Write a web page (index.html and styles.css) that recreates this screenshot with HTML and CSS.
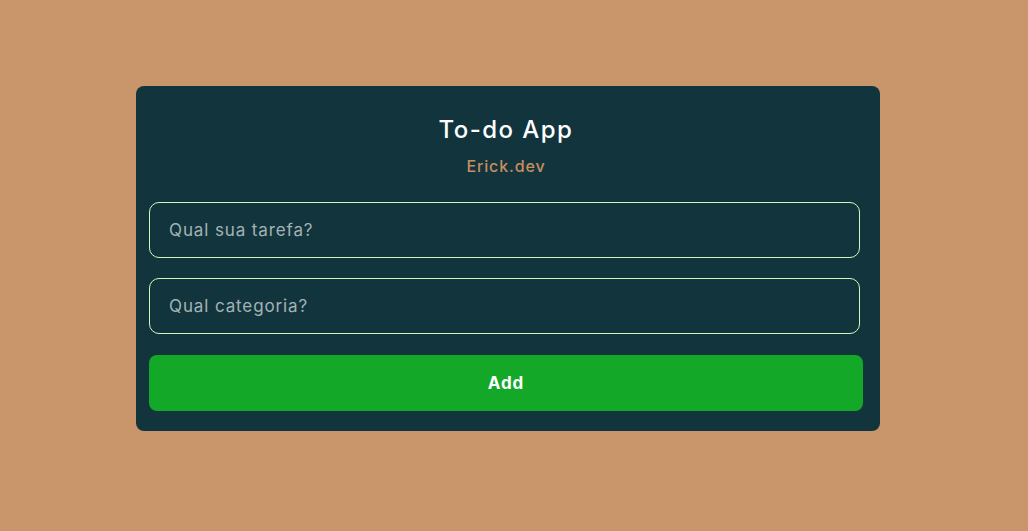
FILE: index.html
```html
<!DOCTYPE html>
<html lang="pt-BR">
<head>
<meta charset="utf-8">
<title>To-do App</title>
<link rel="stylesheet" href="styles.css">
</head>
<body>
<main class="page">
  <section class="card">
    <header class="card-header">
      <h1 class="title">To-do App</h1>
      <p class="subtitle">Erick.dev</p>
    </header>
    <form class="form">
      <input class="field" type="text" placeholder="Qual sua tarefa?">
      <input class="field" type="text" placeholder="Qual categoria?">
      <button class="add-btn" type="button">Add</button>
    </form>
  </section>
</main>
</body>
</html>
```

FILE: styles.css
```css
* { box-sizing: border-box; }
html, body {
  margin: 0;
  height: 100%;
}
body {
  background: #c9956a;
  font-family: "Inter", "Open Sans", sans-serif;
  letter-spacing: 0.055em;
}
.page {
  padding: 86px 148px 0 136px;
}
.card {
  width: 744px;
  background: #12353d;
  border-radius: 8px;
  padding: 26px 17px 20px 13px;
}
.card-header {
  display: flex;
  flex-direction: column;
  align-items: center;
}
.title {
  margin: 0;
  color: #ffffff;
  font-size: 24px;
  line-height: 36px;
  font-weight: 500;
  letter-spacing: 0.06em;
}
.subtitle {
  margin: 6px 0 0;
  color: #c88d60;
  font-size: 16px;
  line-height: 24px;
  font-weight: 500;
}
.form {
  margin-top: 24px;
  display: flex;
  flex-direction: column;
  gap: 20px;
}
.field {
  width: 711px;
  height: 56px;
  background: transparent;
  border: 1px solid #d6f5b8;
  border-radius: 10px;
  padding: 0 19px;
  font-family: inherit;
  font-size: 17px;
  letter-spacing: inherit;
  color: #ffffff;
  outline: none;
}
.field::placeholder {
  color: #a3b3b5;
}
.add-btn {
  width: 714px;
  height: 56px;
  margin-top: 1px;
  border: none;
  border-radius: 8px;
  background: #14a829;
  color: #ffffff;
  font-family: inherit;
  font-size: 17px;
  letter-spacing: inherit;
  font-weight: 700;
  cursor: pointer;
}
```
